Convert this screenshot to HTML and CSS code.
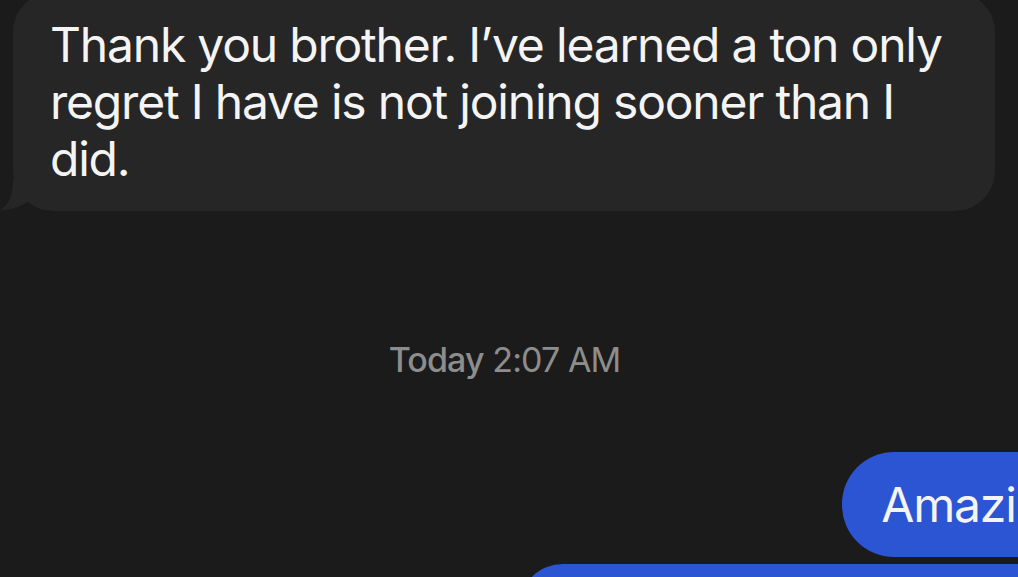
FILE: index.html
```html
<!DOCTYPE html>
<html lang="en">
<head>
  <meta charset="UTF-8" />
  <title>Messages</title>
  <link rel="stylesheet" href="styles.css">
</head>
<body>
  <div class="chat">
    <div class="row row-in">
      <div class="bubble bubble-in">
        Thank you brother. I’ve learned a ton only regret I have is not joining sooner than I did.
        <svg class="tail" width="40" height="31" viewBox="0 0 40 31">
          <path d="M13 0 C13 17 8 26 0 29.5 C11 31 24 26 34 17 L40 0 Z" fill="#262626"/>
        </svg>
      </div>
    </div>

    <div class="stamp"><span class="day">Today</span> 2:07 AM</div>

    <div class="row row-out row-first">
      <div class="bubble bubble-out">Amazing</div>
    </div>
    <div class="row row-out">
      <div class="bubble bubble-out bubble-long">Keep showing up and the rest takes care of itself.</div>
    </div>
  </div>
</body>
</html>
```

FILE: styles.css
```css
body {
  margin: 0;
  background: #1b1b1b;
  font-family: Inter, "Noto Sans", sans-serif;
  overflow: hidden;
  height: 577px;
}
.chat {
  margin-top: -8px;
  padding-left: 13px;
  display: flex;
  flex-direction: column;
}
.row {
  display: flex;
}
.row-out {
  justify-content: flex-end;
}
.bubble {
  position: relative;
  box-sizing: border-box;
  font-size: 48px;
  line-height: 57px;
  letter-spacing: -1.2px;
  color: #f4f4f4;
  padding: 24px 39px;
  border-radius: 44px;
}
.bubble-in {
  width: 982px;
  padding: 24px 40px 24px 37px;
  background: #262626;
  border-radius: 40px;
}
.tail {
  position: absolute;
  left: -13px;
  bottom: 0;
}
.stamp {
  margin-top: 129px;
  text-align: center;
  font-size: 34px;
  line-height: 40px;
  letter-spacing: -0.9px;
  color: #8d8d8d;
  padding-right: 22px;
}
.stamp .day {
  font-weight: 500;
}
.bubble-out {
  background: #2c55d4;
  white-space: nowrap;
  border-radius: 52px;
}
.row-first {
  margin-top: 72px;
  margin-right: -92px;
}
.bubble-long {
  width: 700px;
  margin-top: 7px;
  margin-right: -201px;
  border-radius: 44px;
}
```
